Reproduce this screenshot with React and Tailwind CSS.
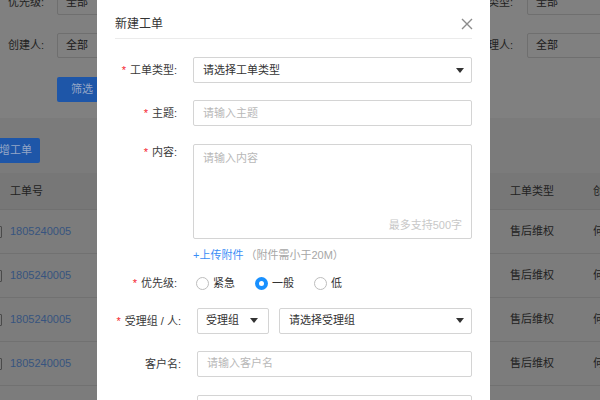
import React from 'react';

const rows = [0, 1, 2, 3, 4];

const Caret = ({ className = '' }) => (
  <svg width="8" height="5" viewBox="0 0 8 5" className={`shrink-0 ${className}`}>
    <path d="M0 0 L8 0 L4 5 Z" fill="#333" />
  </svg>
);

const Label = ({ text, required, width }) => (
  <div className={`${width} shrink-0 whitespace-nowrap text-right text-[11px] text-[#3a3a3a] leading-[14px]`}>
    {required && <span className="text-[#f5222d] mr-[4px]">*</span>}
    {text}
  </div>
);

const Radio = ({ checked, label }) => (
  <div className="flex items-center">
    {checked ? (
      <span className="w-[13px] h-[13px] rounded-full bg-[#1890ff] flex items-center justify-center">
        <span className="w-[5px] h-[5px] rounded-full bg-white" />
      </span>
    ) : (
      <span className="w-[13px] h-[13px] rounded-full border border-[#bdbdbd] bg-white" />
    )}
    <span className="ml-[4px] text-[11px] text-[#333]">{label}</span>
  </div>
);

const FilterRow = ({ left, right, className = '' }) => (
  <div className={`flex items-center h-[25px] whitespace-nowrap ${className}`}>
    <div className="w-[44px] shrink-0 text-right text-[11px] text-[#1f1f1f]">{left}</div>
    <div className="ml-[13px] w-[360px] shrink-0 h-[25px] border border-[#6f6f6f] rounded-[2px] flex items-center pl-[8px] text-[11px] text-[#1a1a1a]">
      全部
    </div>
    <div className="w-[96px] shrink-0 text-right text-[11px] text-[#1f1f1f]">{right}</div>
    <div className="ml-[14px] w-[100px] shrink-0 h-[25px] border border-[#6f6f6f] rounded-[2px] flex items-center pl-[8px] text-[11px] text-[#1a1a1a]">
      全部
    </div>
  </div>
);

export default function App() {
  return (
    <div className="relative w-[600px] h-[400px] overflow-hidden bg-[#7b7b7b] font-['Liberation_Sans','Noto_Sans_CJK_SC',sans-serif]">
      {/* page behind the mask */}
      <div className="h-[118px] bg-[#808080] flex flex-col">
        <FilterRow left="优先级:" right="工单类型:" className="mt-[-10px]" />
        <FilterRow left="创建人:" right="处理人:" className="mt-[18px]" />
        <div className="mt-[19px] ml-[57px] w-[50px] h-[25px] rounded-[2px] bg-[#1e56a8] flex items-center justify-center text-[11px] text-[#94a6c6]">
          筛选
        </div>
      </div>

      <div className="h-[55px] flex items-start">
        <div className="mt-[20px] ml-[-20px] w-[60px] shrink-0 h-[25px] rounded-[2px] bg-[#1e56a8] flex items-center justify-center whitespace-nowrap text-[11px] text-[#94a6c6]">
          新增工单
        </div>
      </div>

      <div className="h-[37px] bg-[#777777] border-b border-[#707070] flex items-center whitespace-nowrap text-[11px] text-[#222]">
        <div className="pl-[10px] w-[510px] shrink-0">工单号</div>
        <div className="w-[83px] shrink-0">工单类型</div>
        <div className="shrink-0">创建人</div>
      </div>
      {rows.map((r) => (
        <div
          key={r}
          className="h-[44px] bg-[#7c7c7c] border-b border-[#717171] flex items-center whitespace-nowrap text-[11px]"
        >
          <div className="ml-[-10px] w-[12px] h-[12px] shrink-0 border border-[#4a4a4a] rounded-[1px]" />
          <div className="ml-[8px] w-[500px] shrink-0 text-[#37547f]">1805240005</div>
          <div className="w-[83px] shrink-0 text-[#222]">售后维权</div>
          <div className="shrink-0 text-[#222]">何先生</div>
        </div>
      ))}

      {/* modal */}
      <div className="absolute left-[97px] top-0 w-[393px] h-[420px] bg-white flex flex-col">
        <div className="mx-[18px] h-[39px] shrink-0 border-b border-[#ebebeb] flex items-start justify-between">
          <span className="mt-[16px] text-[12px] text-[#333] leading-[16px]">新建工单</span>
          <svg width="12" height="12" viewBox="0 0 12 12" className="mt-[18px] mr-[-1px]">
            <path d="M1 1 L11 11 M11 1 L1 11" stroke="#8c8c8c" strokeWidth="1.4" />
          </svg>
        </div>

        {/* 工单类型 */}
        <div className="flex items-center mt-[18px]">
          <Label text="工单类型:" required width="w-[80px]" />
          <div className="ml-[16px] w-[279px] h-[26px] border border-[#d4d4d4] rounded-[2px] flex items-center justify-between pl-[9px] pr-[7px]">
            <span className="text-[11px] text-[#333]">请选择工单类型</span>
            <Caret />
          </div>
        </div>

        {/* 主题 */}
        <div className="flex items-center mt-[17px]">
          <Label text="主题:" required width="w-[80px]" />
          <div className="ml-[16px] w-[279px] h-[26px] border border-[#d4d4d4] rounded-[2px] flex items-center pl-[9px]">
            <span className="text-[11px] text-[#b8b8b8]">请输入主题</span>
          </div>
        </div>

        {/* 内容 */}
        <div className="flex items-start mt-[18px]">
          <div className="pt-[1px]">
            <Label text="内容:" required width="w-[80px]" />
          </div>
          <div className="ml-[16px] w-[279px] h-[95px] border border-[#d4d4d4] rounded-[2px] flex flex-col justify-between pl-[9px] pr-[9px] pt-[6px] pb-[6px]">
            <span className="text-[11px] text-[#b8b8b8] leading-[14px]">请输入内容</span>
            <span className="text-[11px] text-[#c8c8c8] leading-[14px] self-end">最多支持500字</span>
          </div>
        </div>

        {/* upload */}
        <div className="flex items-center mt-[9px] ml-[96px] text-[11px] leading-[14px]">
          <span className="text-[#3a8ef6]">+上传附件</span>
          <span className="ml-[2px] text-[#a6a6a6]">（附件需小于20M）</span>
        </div>

        {/* 优先级 */}
        <div className="flex items-center mt-[13px] h-[20px]">
          <Label text="优先级:" required width="w-[80px]" />
          <div className="ml-[19px] flex items-center gap-[20px]">
            <Radio label="紧急" />
            <Radio checked label="一般" />
            <Radio label="低" />
          </div>
        </div>

        {/* 受理组 */}
        <div className="flex items-center mt-[16px]">
          <Label text="受理组 / 人:" required width="w-[84px]" />
          <div className="ml-[16px] w-[72px] h-[26px] border border-[#d4d4d4] rounded-[2px] flex items-center justify-between pl-[8px] pr-[10px]">
            <span className="text-[11px] text-[#333]">受理组</span>
            <Caret />
          </div>
          <div className="ml-[10px] w-[193px] h-[26px] border border-[#d4d4d4] rounded-[2px] flex items-center justify-between pl-[9px] pr-[7px]">
            <span className="text-[11px] text-[#333]">请选择受理组</span>
            <Caret />
          </div>
        </div>

        {/* 客户名 */}
        <div className="flex items-center mt-[17px]">
          <Label text="客户名:" width="w-[84px]" />
          <div className="ml-[16px] w-[275px] h-[26px] border border-[#d4d4d4] rounded-[2px] flex items-center pl-[9px]">
            <span className="text-[11px] text-[#b8b8b8]">请输入客户名</span>
          </div>
        </div>

        <div className="flex items-center mt-[18px]">
          <Label text="联系方式:" width="w-[84px]" />
          <div className="ml-[16px] w-[275px] h-[26px] border border-[#d4d4d4] rounded-[2px]" />
        </div>
      </div>
    </div>
  );
}
